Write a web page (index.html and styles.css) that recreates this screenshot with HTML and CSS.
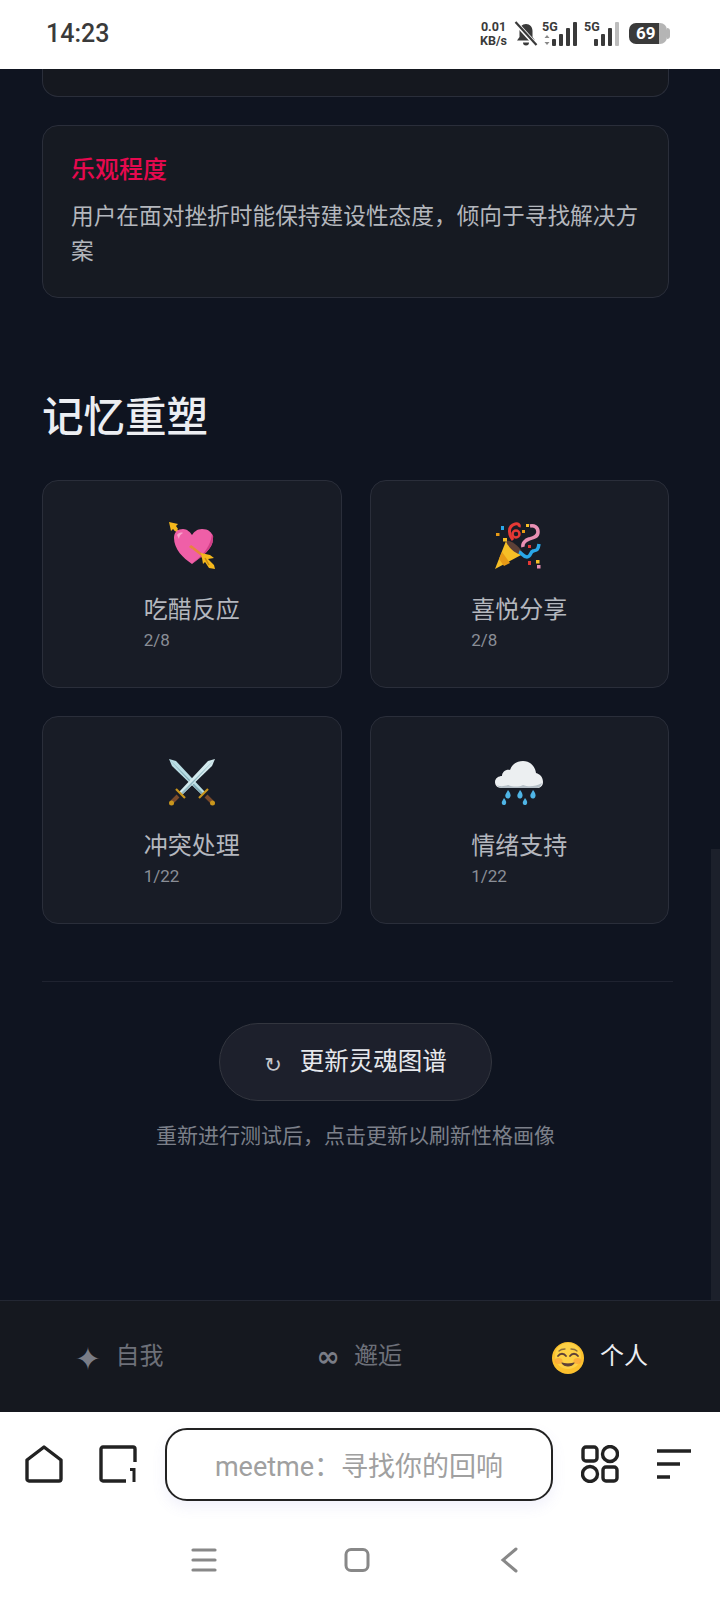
FILE: index.html
```html
<!DOCTYPE html>
<html lang="zh-CN">
<head>
    <meta charset="UTF-8">
    <meta name="viewport" content="width=device-width, initial-scale=1.0">
    <title>meetme</title>
    <link rel="stylesheet" href="styles.css">
</head>
<body>
    <!-- Phone status bar -->
    <div class="statusbar">
        <span class="time">14:23</span>
        <div class="status-icons">
            <div class="netspeed"><span>0.01</span><span>KB/s</span></div>
            <svg class="bell" width="24" height="26" viewBox="0 0 24 26">
                <path d="M12 3c4 0 6.500 3 6.500 7v6l2.500 3.500H3L5.500 16v-6C5.500 6 8 3 12 3z" fill="#3a3a3a"/>
                <path d="M9 21.500h6a3 3 0 0 1-6 0z" fill="#3a3a3a"/>
                <path d="M1 1l21 23" stroke="#fff" stroke-width="4.500"/>
                <path d="M1.500 1l21 23" stroke="#3a3a3a" stroke-width="2.200"/>
            </svg>
            <div class="signal">
                <span class="sig-label">5G</span>
                <svg width="38" height="26" viewBox="0 0 38 26">
                    <path d="M5 14l2.500 3h-5zM5 24l2.500-3h-5z" fill="#888"/>
                    <rect x="10" y="18" width="4" height="7" rx="1" fill="#3a3a3a"/>
                    <rect x="17" y="13" width="4" height="12" rx="1" fill="#3a3a3a"/>
                    <rect x="24" y="7" width="4" height="18" rx="1" fill="#3a3a3a"/>
                    <rect x="31" y="1" width="4" height="24" rx="1" fill="#3a3a3a"/>
                </svg>
            </div>
            <div class="signal">
                <span class="sig-label">5G</span>
                <svg width="38" height="26" viewBox="0 0 38 26">
                    <rect x="10" y="18" width="4" height="7" rx="1" fill="#3a3a3a"/>
                    <rect x="17" y="13" width="4" height="12" rx="1" fill="#3a3a3a"/>
                    <rect x="24" y="7" width="4" height="18" rx="1" fill="#3a3a3a"/>
                    <rect x="31" y="1" width="4" height="24" rx="1" fill="#bdbdbd"/>
                </svg>
            </div>
            <div class="battery"><span class="battery-num">69</span></div>
        </div>
    </div>

    <div class="main">
        <div class="card card-cut"></div>

        <div class="card trait">
            <div class="trait-title">乐观程度</div>
            <div class="trait-desc">用户在面对挫折时能保持建设性态度，倾向于寻找解决方案</div>
        </div>

        <h2 class="section-title">记忆重塑</h2>

        <div class="memory-grid">
            <div class="card memory">
                <svg class="emoji" width="48" height="48" viewBox="0 0 48 48">
                    <path d="M7 7L40 40" stroke="#e8a03a" stroke-width="2.500"/>
                    <path d="M1 0l9 2-2 2 2 3-3 2-2-2-2 2z" fill="#f5b81c"/>
                    <path d="M24 42C15 36 6 27 6 16 6 10 10 7 15 7c4 0 7 3 9 6 2-3 5-6 10-6 6 0 11 3 11 10 0 10-12 18-21 25z" fill="#ef5fa7"/>
                    <path d="M24 42c5-5 18-13 20-30 2 3 1 3 1 5 0 10-12 18-21 25z" fill="#d13f87"/>
                    <path d="M9 13c1-2 4-3 6-2-2 1-4 3-4 6z" fill="#f9a3cc"/>
                    <path d="M23 23l3 2-2 2-3-2z" fill="#e8863a"/>
                    <path d="M25 26l9 7" stroke="#e8863a" stroke-width="2.500"/>
                    <path d="M33 31l9 2 4 3-6 1 6 6 1 4-6-1-4-6-2 2-1-6z" fill="#f5b81c"/>
                    <path d="M37 36l4 7" stroke="#c98a10" stroke-width="1.500"/>
                </svg>
                <div class="memory-text">
                    <div class="memory-name">吃醋反应</div>
                    <div class="memory-count">2/8</div>
                </div>
            </div>
            <div class="card memory">
                <svg class="emoji" width="48" height="48" viewBox="0 0 48 48">
                    <path d="M0 47l11-28 17 13z" fill="#f6bf26"/>
                    <path d="M4 37l5 7 6-3-8-11z" fill="#e79a16"/>
                    <path d="M11 19c5-2 15 7 17 13-5 2-15-6-17-13z" fill="#5d4037"/>
                    <path d="M18 18c-5-6-5-14 2-16 3-1 5 1 4 3" fill="none" stroke="#e53935" stroke-width="3"/>
                    <circle cx="21" cy="12" r="3.500" fill="none" stroke="#e53935" stroke-width="2.500"/>
                    <path d="M28 25c-1-4 3-7 6-8 4-1 9-2 9-7 0-5-4-7-8-6" fill="none" stroke="#e890b4" stroke-width="3.500"/>
                    <path d="M24 30c3 1 4 5 8 5 4 0 3-5 6-6 3-1 5 0 6-7" fill="none" stroke="#29a7e8" stroke-width="3.500"/>
                    <rect x="6" y="4" width="3" height="4" fill="#29a7e8"/>
                    <rect x="1" y="11" width="3.500" height="3" fill="#e79a16"/>
                    <rect x="8" y="16" width="4" height="3.500" fill="#f6bf26"/>
                    <rect x="31" y="2" width="3" height="3" fill="#f6bf26"/>
                    <rect x="27" y="8" width="3" height="3" fill="#e79a16"/>
                    <rect x="33" y="23" width="3" height="3" fill="#e53935"/>
                    <rect x="41" y="38" width="3.500" height="3.500" fill="#f6bf26"/>
                    <rect x="33" y="39" width="3" height="4" fill="#e53935"/>
                    <rect x="42" y="43" width="3.500" height="3.500" fill="#e890b4"/>
                </svg>
                <div class="memory-text">
                    <div class="memory-name">喜悦分享</div>
                    <div class="memory-count">2/8</div>
                </div>
            </div>
            <div class="card memory">
                <svg class="emoji" width="48" height="48" viewBox="0 0 48 48">
                    <path d="M1 1l7 2 29 31-3 3L4 8z" fill="#b9dde4"/>
                    <path d="M1 1l33 36 1.500-1.500z" fill="#7fa9b4"/>
                    <path d="M47 1l-7 2-29 31 3 3 30-29z" fill="#d3eaee"/>
                    <path d="M47 1L14 37l-1.500-1.500z" fill="#8fb6c0"/>
                    <path d="M8 31l9 9" stroke="#c9961c" stroke-width="2.200"/>
                    <path d="M40 31l-9 9" stroke="#c9961c" stroke-width="2.200"/>
                    <path d="M10 38l-6 6" stroke="#7a4a2a" stroke-width="4"/>
                    <path d="M38 38l6 6" stroke="#7a4a2a" stroke-width="4"/>
                    <circle cx="3.500" cy="45" r="2.500" fill="#c9961c"/>
                    <circle cx="44.500" cy="45" r="2.500" fill="#c9961c"/>
                </svg>
                <div class="memory-text">
                    <div class="memory-name">冲突处理</div>
                    <div class="memory-count">1/22</div>
                </div>
            </div>
            <div class="card memory">
                <svg class="emoji" width="48" height="48" viewBox="0 0 48 48">
                    <path d="M7 30C2 30 0 27 0 24c0-4 4-6 7-6 0-4 4-7 8-6 2-6 7-9 13-9 7 0 12 5 13 12 4 1 7 4 7 9 0 4-3 6-6 6z" fill="#eceff1"/>
                    <path d="M2 27c3 2 8 1 11 0 5 2 11 2 15 0 5 2 12 2 19-2-1 3-3 5-5 5H7c-2 0-4-1-5-3z" fill="#b4bec6"/>
                    <path d="M13 32c2.500 3 3.500 6 1.500 8-2.500 1.500-5-.5-4-3.500z" fill="#4fb5e6"/>
                    <path d="M25 32c2.500 3 3.500 6 1.500 8-2.500 1.500-5-.5-4-3.500z" fill="#4fb5e6"/>
                    <path d="M38 32c2.500 3 3.500 6 1.500 8-2.500 1.500-5-.5-4-3.500z" fill="#4fb5e6"/>
                    <path d="M9 40c2 2.500 3 4.500 1.500 6.500-2.500 1.500-4.500-.5-3.500-3z" fill="#4fb5e6"/>
                    <path d="M30 40c2 2.500 3 4.500 1.500 6.500-2.500 1.500-4.500-.5-3.500-3z" fill="#4fb5e6"/>
                </svg>
                <div class="memory-text">
                    <div class="memory-name">情绪支持</div>
                    <div class="memory-count">1/22</div>
                </div>
            </div>
        </div>

        <div class="divider"></div>

        <div class="refresh-wrap">
            <button class="refresh-btn"><span class="refresh-icon">↻</span>更新灵魂图谱</button>
            <p class="refresh-note">重新进行测试后，点击更新以刷新性格画像</p>
        </div>

        <div class="scrollbar"></div>
    </div>

    <!-- Bottom tabs of the app -->
    <div class="tabbar">
        <div class="tab"><span class="tab-icon tab-star">✦</span>自我</div>
        <div class="tab"><span class="tab-icon tab-inf">∞</span>邂逅</div>
        <div class="tab tab-active">
            <svg class="tab-emoji" width="32" height="32" viewBox="0 0 32 32">
                <circle cx="16" cy="16" r="16" fill="#fbc02d"/>
                <circle cx="16" cy="14" r="13" fill="#fdd146"/>
                <ellipse cx="6.500" cy="19" rx="4" ry="3" fill="#f9a13a" opacity="0.7"/>
                <ellipse cx="25.500" cy="19" rx="4" ry="3" fill="#f9a13a" opacity="0.7"/>
                <path d="M6 14c2-3 6-3 8 0M18 14c2-3 6-3 8 0" fill="none" stroke="#5d4037" stroke-width="1.800" stroke-linecap="round"/>
                <path d="M7 9c2-2 4-2 6-2M19 7c2 0 4 0 6 2" fill="none" stroke="#8d6e3a" stroke-width="1.300" stroke-linecap="round"/>
                <path d="M10 21c3 4 9 4 12 0-3 1-9 1-12 0z" fill="#5d4037" stroke="#5d4037" stroke-width="1.200" stroke-linejoin="round"/>
            </svg>
            个人
        </div>
    </div>

    <!-- Browser toolbar and system navigation -->
    <div class="browser">
        <div class="toolbar">
            <svg class="tool-icon" width="38" height="38" viewBox="0 0 38 38">
                <path d="M2 15L19 2l17 13v19a2 2 0 0 1-2 2H4a2 2 0 0 1-2-2z" fill="none" stroke="#222" stroke-width="3.400" stroke-linejoin="round"/>
            </svg>
            <svg class="tool-icon tool-tabs" width="38" height="38" viewBox="0 0 38 38">
                <path d="M27 36H4a2 2 0 0 1-2-2V4a2 2 0 0 1 2-2h30a2 2 0 0 1 2 2v13" fill="none" stroke="#222" stroke-width="3.400"/>
                <path d="M31 23h5.500v14h-3V26H31z" fill="#222"/>
            </svg>
            <div class="searchbox">meetme：寻找你的回响</div>
            <svg class="tool-icon" width="38" height="38" viewBox="0 0 38 38">
                <rect x="2" y="2" width="14" height="14" rx="3" fill="none" stroke="#222" stroke-width="3.400"/>
                <circle cx="29" cy="9" r="7.500" fill="none" stroke="#222" stroke-width="3.400"/>
                <circle cx="9" cy="29" r="7.500" fill="none" stroke="#222" stroke-width="3.400"/>
                <rect x="22" y="22" width="14" height="14" rx="3" fill="none" stroke="#222" stroke-width="3.400"/>
            </svg>
            <svg class="tool-icon tool-menu" width="36" height="38" viewBox="0 0 36 38">
                <path d="M1 6h34M1 19h23M1 32h13" stroke="#222" stroke-width="3.500"/>
            </svg>
        </div>
        <div class="navbar">
            <svg width="26" height="24" viewBox="0 0 26 24">
                <path d="M2 2h22M2 12h22M2 22h22" stroke="#888" stroke-width="3.200" stroke-linecap="round"/>
            </svg>
            <svg width="26" height="24" viewBox="0 0 26 24">
                <rect x="2" y="1.500" width="22" height="21" rx="5" fill="none" stroke="#888" stroke-width="3"/>
            </svg>
            <svg class="nav-back" width="18" height="26" viewBox="0 0 18 26">
                <path d="M16 2L3 13l13 11" fill="none" stroke="#888" stroke-width="3" stroke-linecap="round"/>
            </svg>
        </div>
    </div>
</body>
</html>
```

FILE: styles.css
```css
* {
    box-sizing: border-box;
}

body {
    margin: 0;
    width: 720px;
    height: 1600px;
    overflow: hidden;
    background-color: #fff;
    font-family: Roboto, "Noto Sans CJK SC", sans-serif;
}

/* Status bar */
.statusbar {
    height: 69px;
    background-color: #fff;
    display: flex;
    align-items: center;
    justify-content: space-between;
    padding: 0 53px 2px 46px;
    color: #3a3a3a;
}

.time {
    font-size: 25px;
    font-weight: 500;
}

.status-icons {
    display: flex;
    align-items: center;
    gap: 4px;
}

.netspeed {
    display: flex;
    flex-direction: column;
    align-items: center;
    font-size: 12.500px;
    font-weight: 700;
    line-height: 14px;
    margin-right: 3px;
}

.signal {
    position: relative;
    width: 38px;
    height: 26px;
}

.signal svg {
    display: block;
}

.sig-label {
    position: absolute;
    left: 0;
    top: 0;
    font-size: 12.500px;
    font-weight: 700;
    line-height: 12px;
}

.battery {
    width: 38px;
    height: 21px;
    border-radius: 7px;
    background: linear-gradient(to right, #3a3a3a 78%, #b5b5b5 78%);
    color: #fff;
    font-size: 17px;
    font-weight: 700;
    line-height: 21px;
    padding-left: 7px;
    margin-left: 3px;
    position: relative;
}

.battery::after {
    content: "";
    position: absolute;
    right: -3px;
    top: 5px;
    width: 3px;
    height: 11px;
    border-radius: 0 3px 3px 0;
    background-color: #b5b5b5;
}

/* Scrolling page */
.main {
    height: 1231px;
    width: 720px;
    padding: 0 51px 0 42px;
    background-color: #0f1420;
    overflow: hidden;
    position: relative;
}

.card {
    background-color: #181c26;
    border: 1px solid #2a2e3a;
    border-radius: 16px;
}

.card-cut {
    height: 28px;
    background-color: #15181f;
    border-top: none;
    border-radius: 0 0 16px 16px;
    margin-bottom: 28px;
}

.trait {
    height: 173px;
    padding: 27px 28px;
    background-color: #161a22;
}

.trait-title {
    color: #e6094f;
    font-size: 24px;
    font-weight: 500;
    line-height: 34px;
    margin-bottom: 12px;
}

.trait-desc {
    color: #b4b7bd;
    font-size: 22.700px;
    line-height: 35px;
}

.section-title {
    color: #eceef2;
    font-size: 41.500px;
    font-weight: 500;
    line-height: 56px;
    margin: 92px 0 34px;
}

.memory-grid {
    display: grid;
    grid-template-columns: repeat(2, 1fr);
    gap: 28px;
}

.memory {
    height: 208px;
    padding-top: 41px;
    display: flex;
    flex-direction: column;
    align-items: center;
}

.emoji {
    margin-bottom: 23px;
}

.memory-name {
    color: #b4b7be;
    font-size: 24px;
    line-height: 34px;
}

.memory-count {
    color: #8a8e97;
    font-size: 17px;
    line-height: 24px;
    margin-top: 1px;
}

.divider {
    height: 1px;
    background-color: #1f2330;
    margin: 57px -4px 0 0;
}

.refresh-wrap {
    display: flex;
    flex-direction: column;
    align-items: center;
}

.refresh-btn {
    width: 273px;
    height: 78px;
    margin-top: 41px;
    padding: 0 0 6px;
    background-color: #1d202c;
    border: 1px solid #33363f;
    border-radius: 39px;
    color: #e6e8ec;
    font-family: inherit;
    font-size: 24.500px;
    display: flex;
    align-items: center;
    justify-content: center;
}

.refresh-icon {
    font-family: "DejaVu Sans", sans-serif;
    font-size: 21px;
    color: #c4c7cd;
    margin: 12px 18px 0 0;
}

.refresh-note {
    margin: 20px 0 0;
    color: #7c808a;
    font-size: 21px;
    line-height: 30px;
}

.scrollbar {
    position: absolute;
    right: 0;
    top: 780px;
    width: 9px;
    height: 451px;
    background-color: #1c202b;
}

/* App tabs */
.tabbar {
    height: 112px;
    padding-bottom: 6px;
    background-color: #15181f;
    border-top: 1px solid #232733;
    display: flex;
}

.tab {
    flex: 1;
    display: flex;
    align-items: center;
    justify-content: center;
    gap: 16px;
    color: #6d7079;
    font-size: 24px;
}

.tab-active {
    gap: 16px;
    color: #eceef2;
}

.tab-emoji {
    margin-top: 8px;
}

.tab-icon {
    font-family: "DejaVu Sans", sans-serif;
    line-height: 24px;
    color: #7a7d87;
    display: flex;
    justify-content: center;
}

.tab-star {
    width: 23px;
    font-size: 32px;
    margin-top: 10px;
}

.tab-inf {
    width: 20px;
    font-size: 28px;
    font-weight: 700;
    margin-top: 6px;
}

/* Browser chrome */
.browser {
    height: 188px;
    background-color: #fff;
}

.toolbar {
    height: 88px;
    padding: 16px 28px 0 25px;
    display: flex;
    align-items: flex-start;
}

.tool-icon {
    margin-top: 17px;
    flex-shrink: 0;
}

.tool-tabs {
    margin-left: 36px;
}

.searchbox {
    width: 389px;
    height: 73px;
    margin: 0 28px 0 28px;
    border: 2px solid #222;
    border-radius: 22px;
    box-shadow: 0 6px 14px rgba(120, 120, 220, 0.1);
    color: #a0a0a0;
    font-size: 27px;
    display: flex;
    align-items: center;
    justify-content: center;
}

.tool-menu {
    margin-left: 37px;
}

.navbar {
    display: flex;
    align-items: center;
    padding: 47px 0 0 191px;
    gap: 127px;
}

.nav-back {
    margin-left: 3px;
}
```
